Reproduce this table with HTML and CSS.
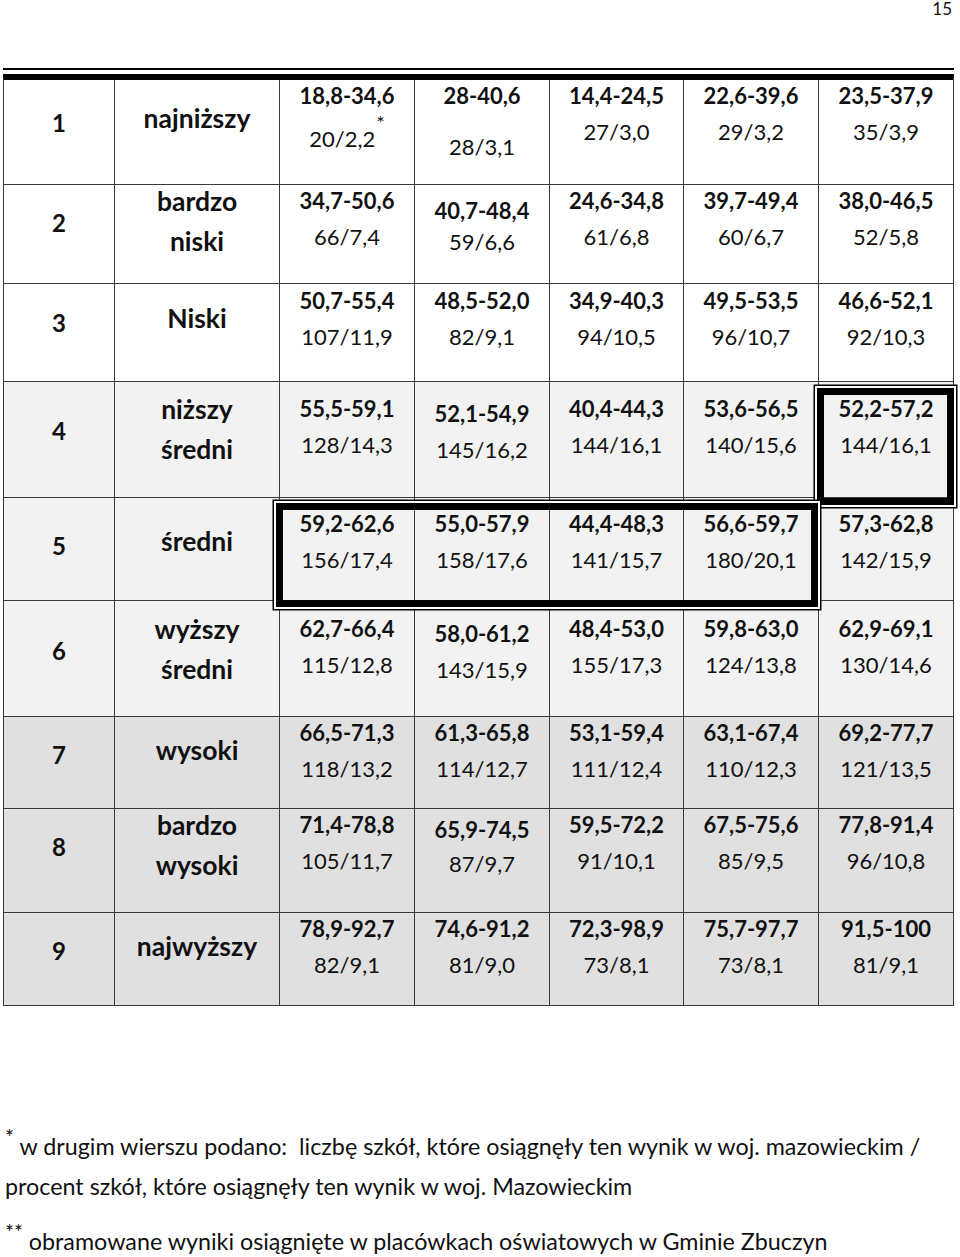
FILE: index.html
```html
<!DOCTYPE html>
<html lang="pl">
<head>
<meta charset="utf-8">
<title>Wyniki – tabela staninowa</title>
<link rel="stylesheet" href="styles.css">
</head>
<body>
<div class="pageno">15</div>

<div class="sheet">
  <div class="grid">
    <div class="row r-w top0">
      <div class="c num down5"><span class="big">1</span></div>
      <div class="c lab down5"><div class="lbox"><span>najniższy</span></div></div>
      <div class="c"><span class="rng">18,8-34,6</span><span class="cnt lo7">20/2,2<sup class="ast">*</sup></span></div>
      <div class="c"><span class="rng">28-40,6</span><span class="cnt lo15">28/3,1</span></div>
      <div class="c"><span class="rng">14,4-24,5</span><span class="cnt">27/3,0</span></div>
      <div class="c"><span class="rng">22,6-39,6</span><span class="cnt">29/3,2</span></div>
      <div class="c"><span class="rng">23,5-37,9</span><span class="cnt">35/3,9</span></div>
    </div>

    <div class="row r-w top0">
      <div class="c num"><span class="big">2</span></div>
      <div class="c lab"><div class="lbox two"><span>bardzo</span><span>niski</span></div></div>
      <div class="c"><span class="rng">34,7-50,6</span><span class="cnt">66/7,4</span></div>
      <div class="c"><span class="rng d10">40,7-48,4</span><span class="cnt up5">59/6,6</span></div>
      <div class="c"><span class="rng">24,6-34,8</span><span class="cnt">61/6,8</span></div>
      <div class="c"><span class="rng">39,7-49,4</span><span class="cnt">60/6,7</span></div>
      <div class="c"><span class="rng">38,0-46,5</span><span class="cnt">52/5,8</span></div>
    </div>

    <div class="row r-w top1">
      <div class="c num"><span class="big">3</span></div>
      <div class="c lab"><div class="lbox"><span>Niski</span></div></div>
      <div class="c"><span class="rng">50,7-55,4</span><span class="cnt">107/11,9</span></div>
      <div class="c"><span class="rng">48,5-52,0</span><span class="cnt">82/9,1</span></div>
      <div class="c"><span class="rng">34,9-40,3</span><span class="cnt">94/10,5</span></div>
      <div class="c"><span class="rng">49,5-53,5</span><span class="cnt">96/10,7</span></div>
      <div class="c"><span class="rng">46,6-52,1</span><span class="cnt">92/10,3</span></div>
    </div>

    <div class="row r-l top11">
      <div class="c num"><span class="big">4</span></div>
      <div class="c lab"><div class="lbox two"><span>niższy</span><span>średni</span></div></div>
      <div class="c"><span class="rng">55,5-59,1</span><span class="cnt">128/14,3</span></div>
      <div class="c"><span class="rng d5">52,1-54,9</span><span class="cnt">145/16,2</span></div>
      <div class="c"><span class="rng">40,4-44,3</span><span class="cnt">144/16,1</span></div>
      <div class="c"><span class="rng">53,6-56,5</span><span class="cnt">140/15,6</span></div>
      <div class="c"><span class="rng">52,2-57,2</span><span class="cnt">144/16,1</span></div>
    </div>

    <div class="row r-l top10">
      <div class="c num"><span class="big">5</span></div>
      <div class="c lab"><div class="lbox"><span>średni</span></div></div>
      <div class="c"><span class="rng">59,2-62,6</span><span class="cnt">156/17,4</span></div>
      <div class="c"><span class="rng">55,0-57,9</span><span class="cnt">158/17,6</span></div>
      <div class="c"><span class="rng">44,4-48,3</span><span class="cnt">141/15,7</span></div>
      <div class="c"><span class="rng">56,6-59,7</span><span class="cnt">180/20,1</span></div>
      <div class="c"><span class="rng">57,3-62,8</span><span class="cnt">142/15,9</span></div>
    </div>

    <div class="row r-l top12">
      <div class="c num"><span class="big">6</span></div>
      <div class="c lab"><div class="lbox two"><span>wyższy</span><span>średni</span></div></div>
      <div class="c"><span class="rng">62,7-66,4</span><span class="cnt">115/12,8</span></div>
      <div class="c"><span class="rng d5">58,0-61,2</span><span class="cnt">143/15,9</span></div>
      <div class="c"><span class="rng">48,4-53,0</span><span class="cnt">155/17,3</span></div>
      <div class="c"><span class="rng">59,8-63,0</span><span class="cnt">124/13,8</span></div>
      <div class="c"><span class="rng">62,9-69,1</span><span class="cnt">130/14,6</span></div>
    </div>

    <div class="row r-d top0">
      <div class="c num"><span class="big">7</span></div>
      <div class="c lab"><div class="lbox"><span>wysoki</span></div></div>
      <div class="c"><span class="rng">66,5-71,3</span><span class="cnt">118/13,2</span></div>
      <div class="c"><span class="rng">61,3-65,8</span><span class="cnt">114/12,7</span></div>
      <div class="c"><span class="rng">53,1-59,4</span><span class="cnt">111/12,4</span></div>
      <div class="c"><span class="rng">63,1-67,4</span><span class="cnt">110/12,3</span></div>
      <div class="c"><span class="rng">69,2-77,7</span><span class="cnt">121/13,5</span></div>
    </div>

    <div class="row r-d top0">
      <div class="c num"><span class="big">8</span></div>
      <div class="c lab"><div class="lbox two"><span>bardzo</span><span>wysoki</span></div></div>
      <div class="c"><span class="rng">71,4-78,8</span><span class="cnt">105/11,7</span></div>
      <div class="c"><span class="rng d5">65,9-74,5</span><span class="cnt up2">87/9,7</span></div>
      <div class="c"><span class="rng">59,5-72,2</span><span class="cnt">91/10,1</span></div>
      <div class="c"><span class="rng">67,5-75,6</span><span class="cnt">85/9,5</span></div>
      <div class="c"><span class="rng">77,8-91,4</span><span class="cnt">96/10,8</span></div>
    </div>

    <div class="row r-d top0">
      <div class="c num"><span class="big">9</span></div>
      <div class="c lab"><div class="lbox"><span>najwyższy</span></div></div>
      <div class="c"><span class="rng">78,9-92,7</span><span class="cnt">82/9,1</span></div>
      <div class="c"><span class="rng">74,6-91,2</span><span class="cnt">81/9,0</span></div>
      <div class="c"><span class="rng">72,3-98,9</span><span class="cnt">73/8,1</span></div>
      <div class="c"><span class="rng">75,7-97,7</span><span class="cnt">73/8,1</span></div>
      <div class="c"><span class="rng">91,5-100</span><span class="cnt">81/9,1</span></div>
    </div>
  </div>

  <div class="frame frame-gmina-b" aria-hidden="true"></div>
  <div class="frame frame-gmina-a" aria-hidden="true"></div>
</div>

<div class="notes">
  <p class="note"><sup class="mark">*</sup> w drugim wierszu podano:&nbsp; liczbę szkół, które osiągnęły ten wynik w woj. mazowieckim /<br>procent szkół, które osiągnęły ten wynik w woj. Mazowieckim</p>
  <p class="note note2"><sup class="mark">**</sup> obramowane wyniki osiągnięte w placówkach oświatowych w Gminie Zbuczyn</p>
</div>
</body>
</html>
```
FILE: styles.css
```css
html, body {
  margin: 0;
  padding: 0;
  background: #fff;
}

body {
  width: 960px;
  font-family: Lato, "Open Sans", "DejaVu Sans", sans-serif;
  color: #111;
}

.pageno {
  height: 19px;
  padding-right: 8px;
  text-align: right;
  font-size: 17px;
  line-height: 17px;
}

.sheet {
  position: relative;
  width: 951px;
  margin: 49px 0 0 3px;
  padding-top: 4px;
  border-top: 2px solid #000;
}

.grid {
  display: grid;
  grid-template-columns: 110px 164px 134px 134px 133px 134px 134px;
  grid-template-rows: 104px 98px 97px 115px 102px 115px 91px 103px 92px;
  gap: 1px;
  background: #3a3a3a;
  border: 1px solid #3a3a3a;
  border-top: 6px solid #000;
}

.row { display: contents; }

.r-w { --bg: #ffffff; }
.r-l { --bg: #f2f2f2; }
.r-d { --bg: #e0e0e0; }

.top0 { --pt: 0px; }
.top1 { --pt: 1px; }
.top10 { --pt: 10px; }
.top11 { --pt: 11px; }
.top12 { --pt: 12px; }

.c {
  display: flex;
  flex-direction: column;
  align-items: center;
  padding-top: var(--pt);
  background: var(--bg);
  text-align: center;
  white-space: nowrap;
}

.rng {
  margin-top: -2px;
  font-size: 22px;
  font-weight: 700;
  line-height: 36px;
}

.cnt {
  font-size: 22px;
  font-weight: 400;
  line-height: 36px;
}

.d5 { margin-top: 3px; }
.d10 { margin-top: 8px; }
.up2 { margin-top: -2px; }
.up5 { margin-top: -5px; }
.lo7 { margin-top: 7px; }
.lo15 { margin-top: 15px; }

.ast {
  font-size: 20px;
  line-height: 0;
  vertical-align: 17px;
  margin-left: 1px;
}

.lbox {
  display: flex;
  flex-direction: column;
  justify-content: center;
  align-items: center;
  height: 80px;
  margin-top: -7px;
}

.lbox.two { margin-top: -4px; }

.lab .lbox {
  font-size: 26.5px;
  font-weight: 700;
  line-height: 40px;
}

.num { justify-content: flex-start; }

.big {
  display: flex;
  align-items: center;
  height: 80px;
  margin-top: -3px;
  font-size: 24px;
  font-weight: 700;
}

.down5 { padding-top: 5px; }

/* "obramowane" double frames: thick inner line, white gap, thin outer line */
.frame {
  position: absolute;
  box-sizing: border-box;
  border: 7px solid #000;
  box-shadow: 0 0 0 2px #fff, 0 0 0 3.5px #000;
  pointer-events: none;
}

.frame-gmina-a {
  left: 273px;
  top: 433px;
  width: 542px;
  height: 104px;
}

.frame-gmina-b {
  left: 814px;
  top: 318px;
  width: 137px;
  height: 117px;
}

.notes {
  margin-top: 120px;
  padding-left: 5px;
  font-size: 23.3px;
  line-height: 40px;
}

.note { margin: 0; }
.note2 { margin-top: 15px; }

.mark {
  font-size: 21px;
  line-height: 0;
  vertical-align: 10px;
}
```
